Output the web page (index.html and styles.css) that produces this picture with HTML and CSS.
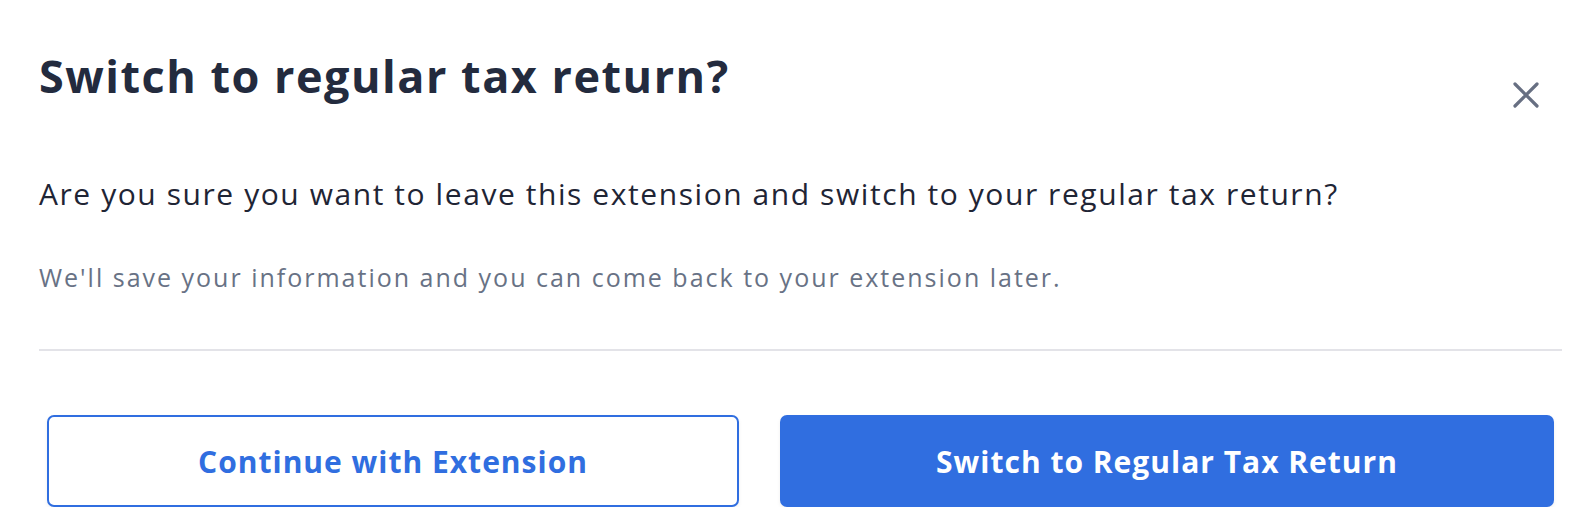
FILE: index.html
```html
<!DOCTYPE html>
<html lang="en">
<head>
    <meta charset="UTF-8">
    <meta name="viewport" content="width=device-width, initial-scale=1.0">
    <title>Switch to regular tax return?</title>
    <link rel="stylesheet" href="styles.css">
</head>
<body>
    <div class="dialog">
        <div class="dialog-header">
            <h1 class="dialog-title">Switch to regular tax return?</h1>
            <button class="close-btn" aria-label="Close">
                <svg width="26" height="26" viewBox="0 0 26 26">
                    <path d="M2 2 L24 24 M24 2 L2 24" stroke="#676f82" stroke-width="3.2" stroke-linecap="round" fill="none"/>
                </svg>
            </button>
        </div>

        <p class="dialog-question">Are you sure you want to leave this extension and switch to your regular tax return?</p>
        <p class="dialog-note">We'll save your information and you can come back to your extension later.</p>

        <hr class="divider">

        <div class="actions">
            <button class="btn btn-secondary">Continue with Extension</button>
            <button class="btn btn-primary">Switch to Regular Tax Return</button>
        </div>
    </div>
</body>
</html>
```

FILE: styles.css
```css
body {
    font-family: 'Open Sans', 'Lato', sans-serif;
    background-color: #fff;
    margin: 0;
    padding: 0;
}

.dialog {
    padding: 0 24px 0 39px;
}

.dialog-header {
    display: flex;
    justify-content: space-between;
    align-items: flex-start;
    padding-top: 48px;
}

.dialog-title {
    margin: 0;
    font-size: 45px;
    line-height: 55px;
    font-weight: 700;
    letter-spacing: 1.5px;
    color: #232b3e;
}

.close-btn {
    background: none;
    border: none;
    padding: 0;
    margin: 34px 23px 0 0;
    width: 26px;
    height: 26px;
    cursor: pointer;
}

.close-btn svg {
    display: block;
}

.dialog-question {
    margin: 69px 0 0;
    font-size: 30px;
    line-height: 34px;
    letter-spacing: 1.57px;
    color: #1f2535;
}

.dialog-note {
    margin: 52px 0 0;
    font-size: 25px;
    line-height: 29px;
    letter-spacing: 2px;
    color: #687285;
}

.divider {
    margin: 57px 0 0;
    border: none;
    height: 2px;
    background-color: #e3e3e8;
}

.actions {
    display: grid;
    grid-template-columns: 692fr 774fr;
    gap: 41px;
    margin: 64px 8px 0;
}

.btn {
    height: 92px;
    border-radius: 7px;
    font-family: inherit;
    font-size: 30px;
    font-weight: 700;
    letter-spacing: 1px;
    cursor: pointer;
    box-shadow: 0 2px 4px rgba(0, 0, 0, 0.06);
}

.btn-secondary {
    background-color: #fff;
    color: #306ee0;
    border: 2px solid #306ee0;
}

.btn-primary {
    background-color: #306ee0;
    color: #fff;
    border: none;
}
```
